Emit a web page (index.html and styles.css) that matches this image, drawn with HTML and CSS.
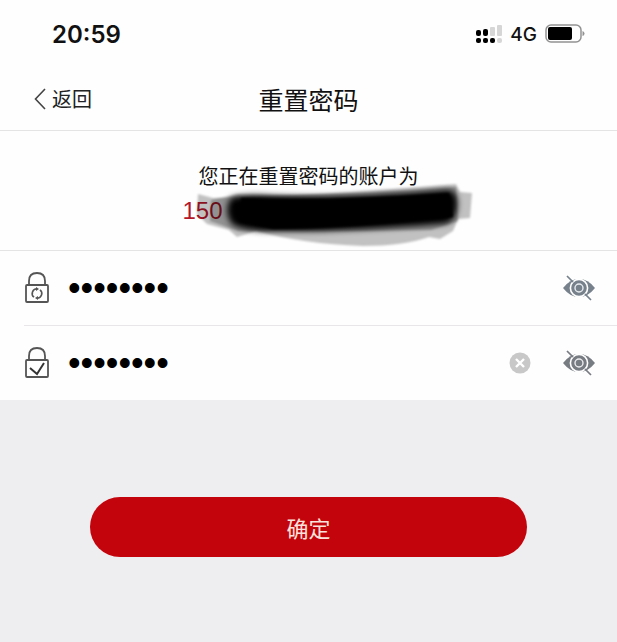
FILE: index.html
```html
<!doctype html>
<html lang="zh-CN">
	<head>
		<meta charset="UTF-8" />
		<meta name="viewport" content="width=device-width, initial-scale=1.0" />
		<title>重置密码</title>
		<link rel="stylesheet" href="styles.css">
	</head>
	<body>
		<div class="status-bar">
			<time class="clock">20:59</time>
			<div class="status-icons">
				<svg width="26" height="20" viewBox="0 0 26 20">
					<g fill="#000">
						<rect x="0" y="6" width="5" height="6" rx="2" />
						<rect x="7" y="5" width="5" height="7" rx="2" />
						<rect x="0" y="14" width="5" height="5" rx="2" />
						<rect x="7" y="14" width="5" height="5" rx="2" />
						<rect x="14" y="14" width="5" height="5" rx="2" />
					</g>
					<g fill="#d6d6d6">
						<rect x="14" y="3" width="5" height="9" rx="1" />
						<rect x="21" y="1" width="5" height="11" rx="1" />
						<rect x="21" y="14" width="5" height="5" rx="2" />
					</g>
				</svg>
				<span class="network">4G</span>
				<svg width="40" height="20" viewBox="0 0 40 20">
					<rect x="1" y="1" width="35" height="17" rx="5" fill="none" stroke="#929292" stroke-width="1.5" />
					<rect x="3" y="3" width="24" height="13" rx="2" fill="#000" />
					<path d="M37.5 7Q39.5 7.5 39.5 9.5T37.5 12Z" fill="#929292" />
				</svg>
			</div>
		</div>
		<header class="navbar">
			<a class="back" href="#">
				<svg width="12" height="22" viewBox="0 0 12 22" fill="none" stroke="#444" stroke-width="1.6">
					<path d="M11 1L1.5 11L11 21" />
				</svg>
				返回
			</a>
			<h1>重置密码</h1>
		</header>
		<main>
			<section class="account">
				<p>您正在重置密码的账户为</p>
				<div class="account-number">
					150
					<svg class="scribble" width="292" height="68" viewBox="0 0 292 68">
						<defs>
							<filter id="soft" x="-5%" y="-20%" width="110%" height="140%">
								<feGaussianBlur stdDeviation="1.2" />
							</filter>
							<filter id="softer" x="-5%" y="-20%" width="110%" height="140%">
								<feGaussianBlur stdDeviation="3" />
							</filter>
						</defs>
						<g filter="url(#soft)" fill="#000">
							<path d="M15 13L30 17Q150 14 273 3L277 11L289 12L287 37L275 38L270 50L257 58L246 56Q220 65 180 65Q120 63 73 50L54 56L46 49L24 43L14 33Z" opacity=".24" />
							<path d="M28 19L55 13Q160 16 273 6L275 40L248 49Q150 51 55 50L27 40Z" opacity=".25" />
						</g>
						<path d="M48 17Q60 13 90 15Q160 18 265 9Q276 10 274 27Q272 43 258 43Q160 51 90 50Q60 50 49 43Q40 30 48 17Z" filter="url(#softer)" />
						<path d="M58 17Q150 20 266 12L270 36Q160 48 90 48L56 41Z" filter="url(#soft)" />
					</svg>
				</div>
			</section>
			<form>
				<div class="field">
					<label for="new-password" aria-label="新密码">
						<svg width="26" height="32" viewBox="0 0 26 32" fill="none" stroke="#555" stroke-width="1.8">
							<path d="M5 13V9Q5 1 13 1T21 9V13" />
							<rect x="2" y="13" width="22" height="17" rx="1" />
							<path d="M10 25.2A4.7 4.7 0 0 1 13 16.8M16 17.8A4.7 4.7 0 0 1 13 26.2" stroke-width="1.6" />
							<path d="M12 15L15 17L12 19ZM14 24L11 26L14 28Z" fill="#555" stroke="none" />
						</svg>
					</label>
					<input type="password" id="new-password" value="12345678" />
					<button type="button" class="icon-button" aria-label="显示密码">
						<svg width="32" height="26" viewBox="0 0 32 26">
							<path d="M0 13Q7 4 16 4T32 13Q25 22 16 22T0 13Z" fill="#77818c" />
							<circle cx="16" cy="13" r="8.6" fill="none" stroke="#fff" stroke-width="1.6" />
							<circle cx="16" cy="13" r="4" fill="none" stroke="#e8ecf0" stroke-width="1.4" />
							<path d="M4 1L10 7M22 19L28 25" stroke="#77818c" stroke-width="1.7" />
						</svg>
					</button>
				</div>
				<div class="field">
					<label for="confirm-password" aria-label="确认密码">
						<svg width="26" height="32" viewBox="0 0 26 32" fill="none" stroke="#555" stroke-width="1.8">
							<path d="M5 13V9Q5 1 13 1T21 9V13" />
							<rect x="2" y="13" width="22" height="17" rx="1" />
							<path d="M6 21L13 27L20 16" stroke="#333" stroke-width="2" />
						</svg>
					</label>
					<input type="password" id="confirm-password" value="12345678" />
					<button type="button" class="icon-button" aria-label="清除">
						<svg width="22" height="22" viewBox="0 0 22 22">
							<circle cx="11" cy="11" r="10.5" fill="#c8c8c8" />
							<path d="M7 7L15 15M15 7L7 15" stroke="#fff" stroke-width="2.4" />
						</svg>
					</button>
					<button type="button" class="icon-button" aria-label="显示密码">
						<svg width="32" height="26" viewBox="0 0 32 26">
							<path d="M0 13Q7 4 16 4T32 13Q25 22 16 22T0 13Z" fill="#777b82" />
							<circle cx="16" cy="13" r="8.6" fill="none" stroke="#fff" stroke-width="1.6" />
							<circle cx="16" cy="13" r="4" fill="none" stroke="#ececee" stroke-width="1.4" />
							<path d="M4 1L10 7M22 19L28 25" stroke="#777b82" stroke-width="1.7" />
						</svg>
					</button>
				</div>
				<div class="actions">
					<button type="submit" class="submit">确定</button>
				</div>
			</form>
		</main>
	</body>
</html>
```
FILE: styles.css
```css
* {
	box-sizing: border-box;
}
body {
	margin: 0;
	min-height: 100vh;
	font-family: "Noto Sans CJK SC", sans-serif;
	color: #111;
	background-color: #eeedef;
}
.status-bar {
	display: flex;
	align-items: center;
	justify-content: space-between;
	height: 68px;
	padding: 0 32px 0 52px;
	font-family: Inter, sans-serif;
	background-color: #fefefe;
}
.clock {
	font-size: 24px;
	font-weight: 600;
}
.status-icons {
	display: flex;
	align-items: center;
	gap: 8px;
}
.network {
	font-size: 19px;
	font-weight: 500;
}
.navbar {
	display: grid;
	grid-template-columns: 1fr auto 1fr;
	align-items: center;
	height: 63px;
	padding: 0 34px;
	line-height: 28px;
	background-color: #fefefe;
	border-bottom: 1px solid #e4e4e4;
}
.back {
	display: flex;
	align-items: center;
	gap: 6px;
	font-size: 20px;
	color: #222;
	text-decoration: none;
}
h1 {
	margin: 0;
	font-size: 25px;
	font-weight: 400;
}
.account {
	height: 120px;
	padding-top: 30px;
	background-color: #fefefe;
	border-bottom: 1px solid #e4e4e4;
}
.account p {
	margin: 0;
	font-size: 20px;
	line-height: 30px;
	text-align: center;
}
.account-number {
	position: relative;
	width: 252px;
	margin: 0 auto;
	font-family: "Liberation Sans", sans-serif;
	font-size: 24px;
	line-height: 40px;
	color: #b5162a;
}
.scribble {
	position: absolute;
	top: -10px;
	left: 0;
}
.field {
	display: flex;
	align-items: center;
	gap: 18px;
	height: 74px;
	padding: 0 22px 0 24px;
	background-color: #fefefe;
}
/* divider starts at the lock icon */
.field + .field {
	height: 75px;
	background-image: linear-gradient(#e8e6e8, #e8e6e8);
	background-repeat: no-repeat;
	background-position: 24px 0;
	background-size: 100% 1px;
}
.field svg {
	display: block;
}
.field input {
	flex: 1;
	min-width: 0;
	height: 48px;
	padding: 0;
	border: 0;
	outline: none;
	font-family: "Liberation Sans", sans-serif;
	font-size: 36px;
	color: #000;
	background: transparent;
}
.icon-button {
	padding: 0;
	margin-left: 14px;
	border: 0;
	background: transparent;
	cursor: pointer;
}
.actions {
	padding: 97px 90px 84px;
}
.submit {
	width: 100%;
	height: 60px;
	border: 0;
	border-radius: 30px;
	font-family: inherit;
	font-size: 22px;
	line-height: 30px;
	color: #fbe3dc;
	background-color: #c4040c;
	cursor: pointer;
}
```
